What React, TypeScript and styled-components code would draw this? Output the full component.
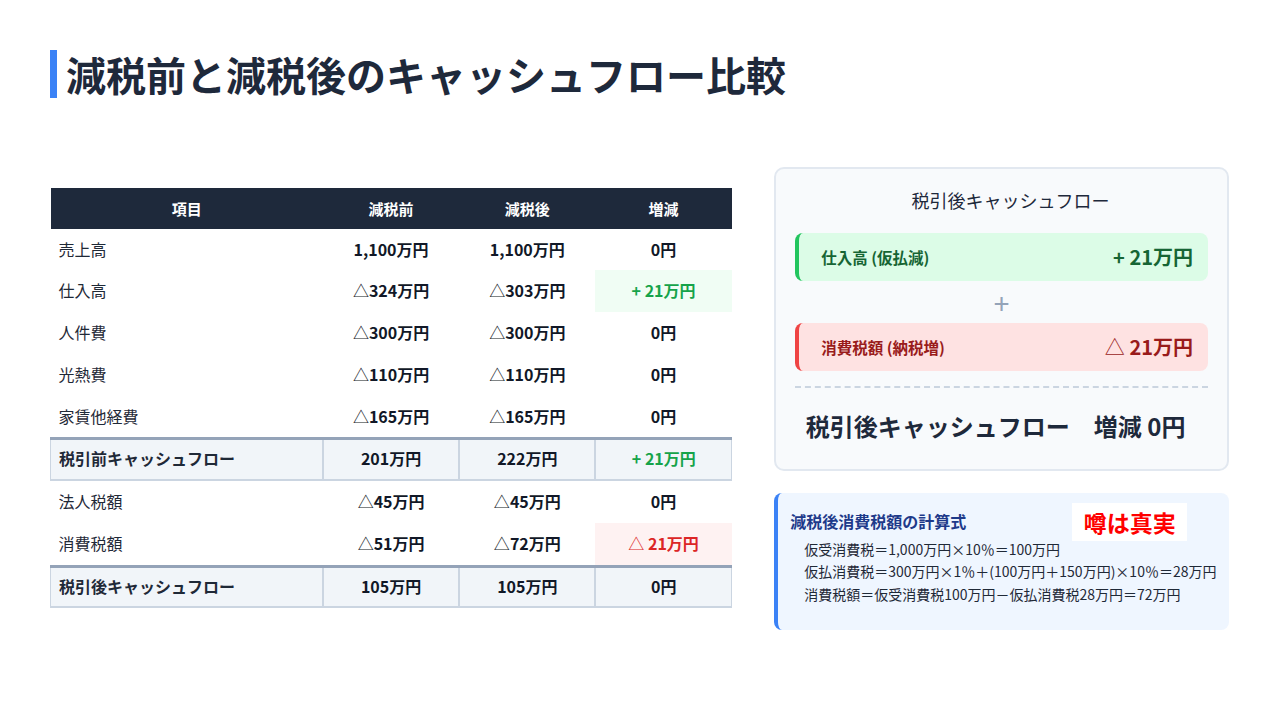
import React from "react";
import styled, { createGlobalStyle } from "styled-components";

const GlobalStyle = createGlobalStyle`
  html, body { margin: 0; padding: 0; background: #ffffff; }
  body { font-family: "Noto Sans CJK JP", "Noto Sans", sans-serif; color: #1e293b; }
  * { box-sizing: border-box; }
`;

const Page = styled.div`
  width: 1280px;
  height: 720px;
  padding: 50px 51px 42px 50px;
  display: flex;
  flex-direction: column;
  background: #ffffff;
`;

const Title = styled.h1`
  margin: 0 0 20px 0;
  height: 48px;
  display: flex;
  align-items: center;
  border-left: 7px solid #3b82f6;
  padding-left: 9px;
  font-size: 40px;
  font-weight: 700;
  color: #1e293b;
  line-height: 48px;
  letter-spacing: 0;
`;

const Main = styled.div`
  flex: 1;
  display: flex;
  align-items: center;
  gap: 42px;
`;

const LeftCol = styled.div`
  flex: 3;
`;

const RightCol = styled.div`
  flex: 2;
  display: flex;
  flex-direction: column;
  gap: 22px;
`;

const Table = styled.table`
  width: 100%;
  border-collapse: collapse;
  table-layout: fixed;
  font-size: 16px;
`;

const Th = styled.th<{ $w: string }>`
  width: ${(p) => p.$w};
  background: #1e293b;
  color: #ffffff;
  font-weight: 700;
  font-size: 15px;
  line-height: 21px;
  padding: 10px 8px;
  text-align: center;
`;

const Tr = styled.tr<{ $total?: boolean }>`
  background: ${(p) => (p.$total ? "#f1f5f9" : "#ffffff")};
  ${(p) =>
    p.$total
      ? `
    & > td {
      border: 2px solid #cbd5e1;
      border-top: 3px solid #94a3b8;
      padding-top: 8px;
      padding-bottom: 9px;
    }
    & > td:first-child { border-left: 1px solid #cbd5e1; }
    & > td:last-child { border-right: 1px solid #cbd5e1; }
  `
      : ""}
`;

const LabelTd = styled.td<{ $bold?: boolean }>`
  padding: 10px 8px;
  line-height: 21.75px;
  text-align: left;
  font-weight: ${(p) => (p.$bold ? 700 : 400)};
  color: #1f2937;
`;

const NumTd = styled.td<{ $tone?: "up" | "down"; $total?: boolean }>`
  padding: 10px 8px;
  line-height: 21.75px;
  text-align: center;
  font-weight: 700;
  color: ${(p) => (p.$tone === "up" ? "#16a34a" : p.$tone === "down" ? "#dc2626" : "#111827")};
  background: ${(p) =>
    p.$total ? "transparent" : p.$tone === "up" ? "#f0fdf4" : p.$tone === "down" ? "#fef2f2" : "transparent"};
`;

const Tri = styled.span`
  font-weight: 400;
`;

const SummaryBox = styled.div`
  background: #f8fafc;
  border: 2px solid #e2e8f0;
  border-radius: 10px;
  padding: 16px 19px 25px 19px;
  display: flex;
  flex-direction: column;
`;

const BoxTitle = styled.div`
  text-align: center;
  font-size: 18px;
  font-weight: 400;
  line-height: 30px;
  color: #1e293b;
  margin-bottom: 18px;
  padding-left: 18px;
`;

const Item = styled.div<{ $tone: "green" | "red" }>`
  height: 48px;
  border-radius: 8px;
  background: ${(p) => (p.$tone === "green" ? "#dcfce7" : "#fee2e2")};
  border-left: 4px solid ${(p) => (p.$tone === "green" ? "#22c55e" : "#ef4444")};
  display: flex;
  align-items: center;
  justify-content: space-between;
  padding: 0 15px 0 22px;
  color: ${(p) => (p.$tone === "green" ? "#166534" : "#991b1b")};
`;

const ItemLabel = styled.span`
  font-size: 15.5px;
  font-weight: 700;
`;

const ItemValue = styled.span`
  font-size: 20px;
  font-weight: 700;
`;

const Plus = styled.div`
  text-align: center;
  font-size: 28px;
  line-height: 42px;
  color: #94a3b8;
  font-weight: 400;
`;

const Dashed = styled.div`
  border-top: 2px dashed #cbd5e1;
  margin-top: 15px;
`;

const Result = styled.div`
  text-align: center;
  font-size: 24px;
  font-weight: 700;
  line-height: 36px;
  color: #1e293b;
  margin-top: 20px;
  padding-right: 12px;
`;

const FormulaBox = styled.div`
  position: relative;
  background: #eff6ff;
  border-left: 4px solid #3b82f6;
  border-radius: 8px;
  padding: 16px 12px 20px 12px;
  height: 137px;
`;

const FormulaTitle = styled.div`
  font-size: 16px;
  font-weight: 700;
  color: #1e3a8a;
  line-height: 24px;
  margin-bottom: 5px;
`;

const FormulaLine = styled.div`
  font-size: 14px;
  line-height: 22.5px;
  color: #1f2937;
  padding-left: 14px;
  white-space: nowrap;
`;

const Stamp = styled.div`
  position: absolute;
  top: 10px;
  left: 294px;
  width: 115px;
  height: 38px;
  background: #ffffff;
  color: #ff0000;
  font-size: 23px;
  font-weight: 700;
  display: flex;
  align-items: center;
  justify-content: center;
`;

type Row = {
  label: string;
  before: string;
  after: string;
  diff: string;
  tone?: "up" | "down";
  total?: boolean;
};

const rows: Row[] = [
  { label: "売上高", before: "1,100万円", after: "1,100万円", diff: "0円" },
  { label: "仕入高", before: "△324万円", after: "△303万円", diff: "+ 21万円", tone: "up" },
  { label: "人件費", before: "△300万円", after: "△300万円", diff: "0円" },
  { label: "光熱費", before: "△110万円", after: "△110万円", diff: "0円" },
  { label: "家賃他経費", before: "△165万円", after: "△165万円", diff: "0円" },
  { label: "税引前キャッシュフロー", before: "201万円", after: "222万円", diff: "+ 21万円", tone: "up", total: true },
  { label: "法人税額", before: "△45万円", after: "△45万円", diff: "0円" },
  { label: "消費税額", before: "△51万円", after: "△72万円", diff: "△ 21万円", tone: "down" },
  { label: "税引後キャッシュフロー", before: "105万円", after: "105万円", diff: "0円", total: true },
];

const renderValue = (v: string) => {
  if (v.startsWith("△")) {
    return (
      <>
        <Tri>△</Tri>
        {v.slice(1)}
      </>
    );
  }
  return v;
};

export default function App() {
  return (
    <>
      <GlobalStyle />
      <Page>
        <Title>減税前と減税後のキャッシュフロー比較</Title>
        <Main>
          <LeftCol>
            <Table>
              <thead>
                <tr>
                  <Th $w="40%">項目</Th>
                  <Th $w="20%">減税前</Th>
                  <Th $w="20%">減税後</Th>
                  <Th $w="20%">増減</Th>
                </tr>
              </thead>
              <tbody>
                {rows.map((r) => (
                  <Tr key={r.label} $total={r.total}>
                    <LabelTd $bold={r.total}>{r.label}</LabelTd>
                    <NumTd>{renderValue(r.before)}</NumTd>
                    <NumTd>{renderValue(r.after)}</NumTd>
                    <NumTd $tone={r.tone} $total={r.total}>
                      {renderValue(r.diff)}
                    </NumTd>
                  </Tr>
                ))}
              </tbody>
            </Table>
          </LeftCol>
          <RightCol>
            <SummaryBox>
              <BoxTitle>税引後キャッシュフロー</BoxTitle>
              <Item $tone="green">
                <ItemLabel>仕入高 (仮払減)</ItemLabel>
                <ItemValue>+ 21万円</ItemValue>
              </Item>
              <Plus>+</Plus>
              <Item $tone="red">
                <ItemLabel>消費税額 (納税増)</ItemLabel>
                <ItemValue>
                  <Tri>△</Tri> 21万円
                </ItemValue>
              </Item>
              <Dashed />
              <Result>税引後キャッシュフロー　増減 0円</Result>
            </SummaryBox>
            <FormulaBox>
              <FormulaTitle>減税後消費税額の計算式</FormulaTitle>
              <FormulaLine>仮受消費税＝1,000万円×10％＝100万円</FormulaLine>
              <FormulaLine>仮払消費税＝300万円×1％＋(100万円＋150万円)×10％＝28万円</FormulaLine>
              <FormulaLine>消費税額＝仮受消費税100万円－仮払消費税28万円＝72万円</FormulaLine>
              <Stamp>噂は真実</Stamp>
            </FormulaBox>
          </RightCol>
        </Main>
      </Page>
    </>
  );
}
